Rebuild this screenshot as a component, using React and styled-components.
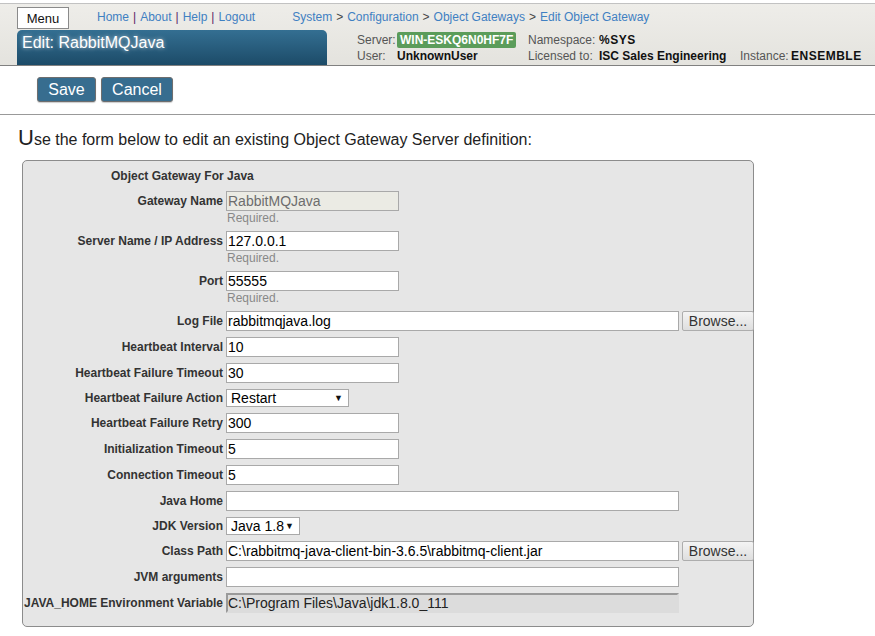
import React from "react";
import styled, { createGlobalStyle } from "styled-components";

const Global = createGlobalStyle`
  html, body { margin: 0; padding: 0; background: #fff; }
  body { font-family: "Liberation Sans", Arial, sans-serif; color: #222; }
  * { box-sizing: border-box; }
`;

const Page = styled.div`
  padding-top: 3px;
  width: 875px;
`;

const Header = styled.header`
  border-top: 1px solid #c2c2c2;
  border-bottom: 1px solid #808080;
  background: linear-gradient(#eeede9, #e4e3de);
  padding-top: 3px;
`;

const NavRow = styled.div`
  display: flex;
  align-items: center;
  height: 22px;
  padding-left: 17px;
`;

const MenuButton = styled.div`
  width: 52px;
  height: 22px;
  border: 1px solid #8a8a8a;
  background: #fff;
  font-size: 13px;
  color: #111;
  display: flex;
  align-items: center;
  justify-content: center;
`;

const Links = styled.div`
  margin-left: 28px;
  margin-top: -2px;
  font-size: 12px;
  color: #3f80c2;
  display: flex;
  gap: 4px;
`;

const Sep = styled.span`
  color: #5b2466;
`;

const Crumbs = styled.div`
  margin-left: 37px;
  margin-top: -2px;
  font-size: 12px;
  color: #3f80c2;
  display: flex;
  gap: 4px;
`;

const Gt = styled.span`
  color: #444;
`;

const TitleRow = styled.div`
  display: flex;
  margin-top: 1px;
  padding-left: 17px;
`;

const TitleBar = styled.div`
  width: 310px;
  height: 35px;
  border-radius: 5px 5px 0 0;
  background: linear-gradient(#346f92, #1c4b68);
  color: #fff;
  font-size: 16px;
  line-height: 18px;
  padding: 4px 5px;
  text-shadow: 0 0 4px rgba(255, 255, 255, 0.7);
`;

const Info = styled.div`
  margin-left: 30px;
  padding-top: 2px;
  display: grid;
  grid-template-columns: 40px 131px 71px 141px 51px auto;
  grid-auto-rows: 16px;
  align-items: center;
  font-size: 12px;
`;

const InfoLabel = styled.span`
  color: #555;
  white-space: nowrap;
`;

const InfoValue = styled.span`
  color: #111;
  font-weight: bold;
  white-space: nowrap;
  letter-spacing: ${(p) => (p.$wide ? "0.5px" : "0")};
`;

const Badge = styled.span`
  justify-self: start;
  background: #5b9c5a;
  color: #fff;
  font-weight: bold;
  padding: 0 3px;
  height: 16px;
  line-height: 16px;
  border-radius: 2px;
  white-space: nowrap;
`;

const Toolbar = styled.div`
  padding: 11px 0 12px 37px;
  display: flex;
  gap: 5px;
  border-bottom: 1px solid #999;
`;

const ActionButton = styled.button`
  height: 25px;
  width: ${(p) => p.$w}px;
  background: #376d8f;
  color: #fff;
  font-family: "Liberation Sans", Arial, sans-serif;
  font-size: 16px;
  border: 1px solid #6e6e6e;
  border-radius: 3px;
  padding: 0;
  box-shadow: 0 1px 1px rgba(0, 0, 0, 0.2);
`;

const Intro = styled.p`
  margin: 11px 0 0 18px;
  font-size: 16px;
  line-height: 24px;
  color: #222;
`;

const BigU = styled.span`
  font-size: 22px;
`;

const FormBox = styled.div`
  margin: 8px 0 0 22px;
  width: 732px;
  border: 1px solid #8c8c8c;
  border-radius: 5px;
  background: #e6e6e6;
  padding: 7px 0 13px 0;
  display: flex;
  flex-direction: column;
  gap: 6px;
`;

const Caption = styled.div`
  padding-left: 88px;
  font-size: 12px;
  font-weight: bold;
  color: #333;
  line-height: 17px;
`;

const Row = styled.div`
  display: flex;
  align-items: flex-start;
  gap: 3px;
`;

const Label = styled.label`
  flex: 0 0 200px;
  display: flex;
  justify-content: flex-end;
  white-space: nowrap;
  font-size: 12px;
  font-weight: bold;
  color: #333;
  line-height: ${(p) => p.$h || 20}px;
  height: ${(p) => p.$h || 20}px;
`;

const Field = styled.div`
  display: flex;
  flex-direction: column;
`;

const Inline = styled.div`
  display: flex;
  gap: 3px;
`;

const TextInput = styled.input`
  width: ${(p) => p.$w}px;
  height: 20px;
  border: 1px solid #a9a9a9;
  background: ${(p) => (p.disabled ? "#ebebe4" : "#fff")};
  color: ${(p) => (p.disabled ? "#6d6d6d" : "#000")};
  font-family: "Liberation Sans", Arial, sans-serif;
  font-size: 14px;
  padding: 0 1px;
  margin: 0;
  outline: none;
`;

const ReadOnlyInput = styled.input`
  width: 453px;
  height: 20px;
  border: 2px solid #dcdcdc;
  border-top-color: #9a9a9a;
  border-left-color: #9a9a9a;
  background: #dcdcdc;
  color: #222;
  font-family: "Liberation Sans", Arial, sans-serif;
  font-size: 14px;
  padding: 0 1px 0 0;
  margin: 0;
  outline: none;
`;

const Required = styled.div`
  font-size: 12px;
  line-height: 14px;
  color: #888;
  padding-left: 1px;
`;

const BrowseButton = styled.button`
  width: 72px;
  height: 20px;
  border: 1px solid #adadad;
  border-radius: 2px;
  background: linear-gradient(#f4f4f4, #dedede);
  font-family: "Liberation Sans", Arial, sans-serif;
  font-size: 14px;
  color: #333;
  padding: 0;
`;

const Select = styled.div`
  width: ${(p) => p.$w}px;
  height: 18px;
  border: 1px solid #a9a9a9;
  background: #fff;
  font-size: 14px;
  color: #000;
  display: flex;
  align-items: center;
  justify-content: space-between;
  padding: 0 5px 0 4px;
`;

const Arrow = styled.span`
  font-size: 9px;
  color: #111;
`;

const simple = [
  ["Heartbeat Interval", "10"],
  ["Heartbeat Failure Timeout", "30"],
];

const after = [
  ["Heartbeat Failure Retry", "300"],
  ["Initialization Timeout", "5"],
  ["Connection Timeout", "5"],
];

export default function App() {
  return (
    <Page>
      <Global />
      <Header>
        <NavRow>
          <MenuButton>Menu</MenuButton>
          <Links>
            <span>Home</span><Sep>|</Sep>
            <span>About</span><Sep>|</Sep>
            <span>Help</span><Sep>|</Sep>
            <span>Logout</span>
          </Links>
          <Crumbs>
            <span>System</span><Gt>&gt;</Gt>
            <span>Configuration</span><Gt>&gt;</Gt>
            <span>Object Gateways</span><Gt>&gt;</Gt>
            <span>Edit Object Gateway</span>
          </Crumbs>
        </NavRow>
        <TitleRow>
          <TitleBar>Edit: RabbitMQJava</TitleBar>
          <Info>
            <InfoLabel>Server:</InfoLabel>
            <Badge>WIN-ESKQ6N0HF7F</Badge>
            <InfoLabel>Namespace:</InfoLabel>
            <InfoValue $wide>%SYS</InfoValue>
            <span />
            <span />
            <InfoLabel>User:</InfoLabel>
            <InfoValue>UnknownUser</InfoValue>
            <InfoLabel>Licensed to:</InfoLabel>
            <InfoValue>ISC Sales Engineering</InfoValue>
            <InfoLabel>Instance:</InfoLabel>
            <InfoValue $wide>ENSEMBLE</InfoValue>
          </Info>
        </TitleRow>
      </Header>
      <Toolbar>
        <ActionButton $w={59}>Save</ActionButton>
        <ActionButton $w={72}>Cancel</ActionButton>
      </Toolbar>
      <Intro>
        <BigU>U</BigU>se the form below to edit an existing Object Gateway Server definition:
      </Intro>
      <FormBox>
        <Caption>Object Gateway For Java</Caption>
        <Row>
          <Label>Gateway Name</Label>
          <Field>
            <TextInput $w={173} disabled defaultValue="RabbitMQJava" />
            <Required>Required.</Required>
          </Field>
        </Row>
        <Row>
          <Label>Server Name / IP Address</Label>
          <Field>
            <TextInput $w={173} defaultValue="127.0.0.1" />
            <Required>Required.</Required>
          </Field>
        </Row>
        <Row>
          <Label>Port</Label>
          <Field>
            <TextInput $w={173} defaultValue="55555" />
            <Required>Required.</Required>
          </Field>
        </Row>
        <Row>
          <Label>Log File</Label>
          <Inline>
            <TextInput $w={453} defaultValue="rabbitmqjava.log" />
            <BrowseButton>Browse...</BrowseButton>
          </Inline>
        </Row>
        {simple.map(([l, v]) => (
          <Row key={l}>
            <Label>{l}</Label>
            <TextInput $w={173} defaultValue={v} />
          </Row>
        ))}
        <Row>
          <Label $h={18}>Heartbeat Failure Action</Label>
          <Select $w={123}>
            <span>Restart</span>
            <Arrow>▼</Arrow>
          </Select>
        </Row>
        {after.map(([l, v]) => (
          <Row key={l}>
            <Label>{l}</Label>
            <TextInput $w={173} defaultValue={v} />
          </Row>
        ))}
        <Row>
          <Label>Java Home</Label>
          <TextInput $w={453} defaultValue="" />
        </Row>
        <Row>
          <Label $h={18}>JDK Version</Label>
          <Select $w={74}>
            <span>Java 1.8</span>
            <Arrow>▼</Arrow>
          </Select>
        </Row>
        <Row>
          <Label>Class Path</Label>
          <Inline>
            <TextInput $w={453} defaultValue="C:\rabbitmq-java-client-bin-3.6.5\rabbitmq-client.jar" />
            <BrowseButton>Browse...</BrowseButton>
          </Inline>
        </Row>
        <Row>
          <Label>JVM arguments</Label>
          <TextInput $w={453} defaultValue="" />
        </Row>
        <Row>
          <Label>JAVA_HOME Environment Variable</Label>
          <ReadOnlyInput readOnly defaultValue="C:\Program Files\Java\jdk1.8.0_111" />
        </Row>
      </FormBox>
    </Page>
  );
}
